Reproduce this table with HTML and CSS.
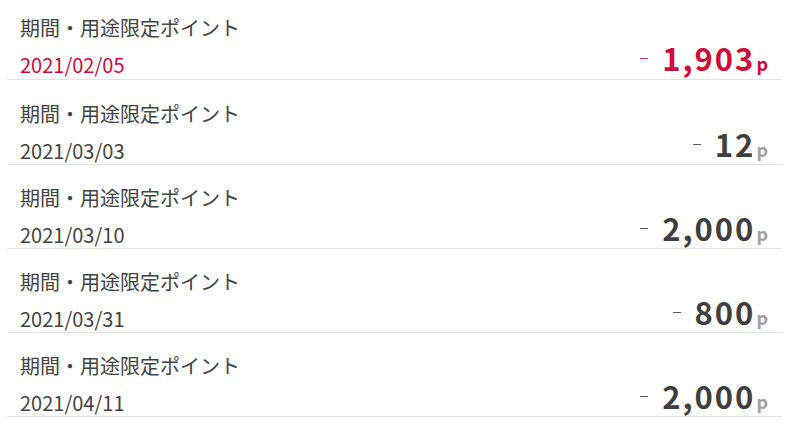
FILE: index.html
```html
<!DOCTYPE html>
<html lang="ja">
<head>
<meta charset="utf-8">
<link rel="stylesheet" href="styles.css">
</head>
<body>
<ul class="list">
  <li class="row row-first">
    <div class="title">期間・用途限定ポイント</div>
    <div class="bottom">
      <span class="date red">2021/02/05</span>
      <span class="amount red"><span class="minus"></span><span class="num">1,903</span><span class="unit">p</span></span>
    </div>
  </li>
  <li class="row">
    <div class="title">期間・用途限定ポイント</div>
    <div class="bottom">
      <span class="date">2021/03/03</span>
      <span class="amount"><span class="minus"></span><span class="num">12</span><span class="unit">p</span></span>
    </div>
  </li>
  <li class="row">
    <div class="title">期間・用途限定ポイント</div>
    <div class="bottom">
      <span class="date">2021/03/10</span>
      <span class="amount"><span class="minus"></span><span class="num">2,000</span><span class="unit">p</span></span>
    </div>
  </li>
  <li class="row">
    <div class="title">期間・用途限定ポイント</div>
    <div class="bottom">
      <span class="date">2021/03/31</span>
      <span class="amount"><span class="minus"></span><span class="num">800</span><span class="unit">p</span></span>
    </div>
  </li>
  <li class="row">
    <div class="title">期間・用途限定ポイント</div>
    <div class="bottom">
      <span class="date">2021/04/11</span>
      <span class="amount"><span class="minus"></span><span class="num">2,000</span><span class="unit">p</span></span>
    </div>
  </li>
</ul>
</body>
</html>
```
FILE: styles.css
```css
* { box-sizing: border-box; }
html, body {
  margin: 0;
  padding: 0;
  background: #ffffff;
}
body {
  font-family: "Noto Sans CJK JP", "Noto Sans", sans-serif;
  color: #444444;
  overflow: hidden;
}
.list {
  list-style: none;
  margin: 0;
  padding: 0 4px 0 7px;
}
.row {
  height: 84px;
  padding: 20px 14px 0 13px;
  border-bottom: 1px solid #e3e3e3;
}
.row-first {
  height: 80px;
  padding-top: 15px;
}
.row:nth-child(2) {
  height: 85px;
  padding-top: 21px;
}
.title {
  font-size: 20px;
  line-height: 26px;
  color: #444444;
}
.bottom {
  margin-top: 4px;
  display: flex;
  justify-content: space-between;
  align-items: baseline;
}
.date {
  font-size: 20px;
  line-height: 26px;
  color: #444444;
}
.amount {
  display: inline-block;
  font-size: 20px;
  line-height: 26px;
  color: #3f3f3f;
  font-weight: 700;
  white-space: nowrap;
}
.minus {
  display: inline-block;
  vertical-align: baseline;
  width: 8px;
  height: 1px;
  background: currentColor;
  margin: 0 14px 14px 0;
  opacity: 0.85;
}
.num {
  font-size: 31px;
  line-height: 26px;
  letter-spacing: 2px;
  vertical-align: 2px;
}
.unit {
  font-size: 18px;
  color: #a0a0a0;
  vertical-align: 2px;
  margin-left: 1px;
}
.red { color: #cf0a3b; }
.amount.red .unit { color: #cf0a3b; }
```
